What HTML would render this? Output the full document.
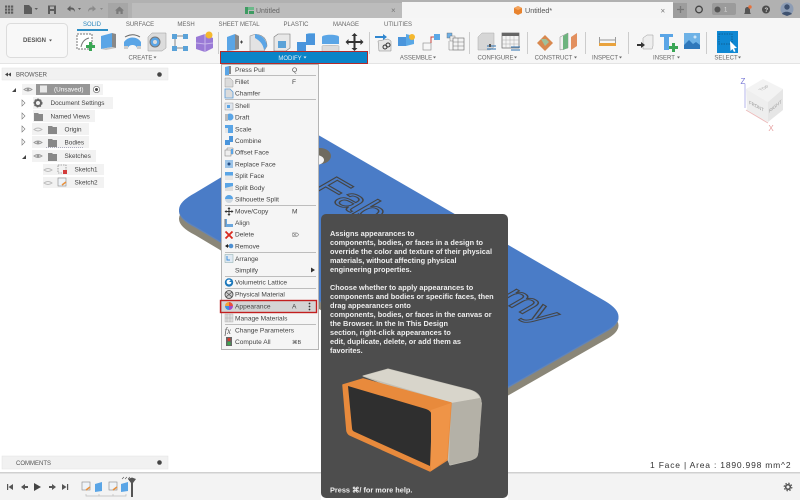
<!DOCTYPE html>
<html><head><meta charset="utf-8"><style>
html,body{margin:0;padding:0;width:800px;height:500px;overflow:hidden;background:#fff}
svg{display:block;font-family:"Liberation Sans",sans-serif;filter:blur(.3px)}
text{white-space:pre}
.w{font-size:7.35px;fill:#eee;font-weight:bold}
</style></head><body>
<svg width="800" height="500" viewBox="0 0 800 500" xmlns="http://www.w3.org/2000/svg">
<rect width="800" height="500" fill="#fff"/>

<!-- plate -->
<path d="M195 202Q163 219 195 235L470 399Q486 408 502 399L605 340Q632 326 605 310L320 145Q305 136 290 145Z" fill="#8a8678"/>
<path d="M195 194.500Q163 211.500 195 227.500L470 391.500Q486 400.500 502 391.500L605 332.500Q632 318.500 605 302.500L320 137.500Q305 128.500 290 137.500Z" fill="#5f84bc"/>
<path d="M195 193Q163 210 195 226L470 390Q486 399 502 390L605 331Q632 317 605 301L320 136Q305 127 290 136Z" fill="#4a7cc7"/>
<ellipse cx="320" cy="156" rx="11" ry="8" fill="#6f6b60"/>
<ellipse cx="316" cy="160" rx="8" ry="5" fill="#f4f4f4"/>
<g font-size="40" fill="none" stroke="#444" stroke-width="1.300">
<text transform="matrix(.866 .5 -.866 .5 310 189)">Fab</text>
<text transform="matrix(.866 .5 -.866 .5 542 325)" text-anchor="end">my</text>
</g>

<!-- top bar -->
<rect width="800" height="18" fill="#b1b1b1"/>
<rect x="108" y="3" width="20" height="15" fill="#a6a6a6"/>
<rect x="132" y="3" width="271" height="15" fill="#bcbcbc"/>
<rect x="402" y="2" width="271" height="16" fill="#f5f5f5"/>
<rect x="673" y="3" width="14" height="15" fill="#9d9d9d"/>
<g fill="#5c5c5c">
<rect x="5" y="5.500" width="2.200" height="2.200"/><rect x="8" y="5.500" width="2.200" height="2.200"/><rect x="11" y="5.500" width="2.200" height="2.200"/><rect x="5" y="8.500" width="2.200" height="2.200"/><rect x="8" y="8.500" width="2.200" height="2.200"/><rect x="11" y="8.500" width="2.200" height="2.200"/><rect x="5" y="11.500" width="2.200" height="2.200"/><rect x="8" y="11.500" width="2.200" height="2.200"/><rect x="11" y="11.500" width="2.200" height="2.200"/>
<path d="M24 5h5l3 3v6h-8z"/><path d="M34.500 8h3.500l-1.800 2z"/>
<path d="M48 5.500h8v8.500h-8zM50 6.500v2.500h4v-2.500zM50 11v3h4v-3z" fill-rule="evenodd"/>
<path id="u" d="M67 9l3.500-3.500v2h1c2 0 3.500 1.500 3.500 4.500c-1-2-2-2.500-4.500-2.500v2z"/><path d="M78 8h3l-1.500 2z"/>
<path d="M67 9l3.500-3.500v2h1c2 0 3.500 1.500 3.500 4.500c-1-2-2-2.500-4.500-2.500v2z" fill="#8a8a8a" transform="matrix(-1 0 0 1 163 0)"/><path d="M100 8h3l-1.500 2z" fill="#8a8a8a"/>
<path d="M119.500 6.500l4.500 4h-1.300v3.500h-2.200v-2.500h-2v2.500h-2.200v-3.500H115z" fill="#7a7a7a"/>
</g>
<rect x="245" y="7" width="3" height="7" fill="#3e9b62"/><rect x="248" y="7" width="6" height="3" fill="#6cb98a"/><rect x="249" y="11" width="5" height="3" fill="#3e9b62"/>
<text x="256" y="13" font-size="7" fill="#666">Untitled</text>
<text x="391" y="13" font-size="8" fill="#777">×</text>
<path d="M514 8l4-2 4 2v5l-4 2-4-2z" fill="#e8832e"/><path d="M514 8l4 2 4-2-4-2z" fill="#f4a35c"/>
<text x="525" y="13" font-size="7.200" fill="#555">Untitled*</text>
<text x="660.500" y="13.500" font-size="8" fill="#777">×</text>
<path d="M680.500 6v7M677 9.500h7" stroke="#777" stroke-width="1.300"/>
<circle cx="699" cy="9.500" r="3.300" fill="none" stroke="#444" stroke-width="1.300"/>
<rect x="712" y="3" width="24" height="12" rx="2" fill="#9b9b9b"/><circle cx="717.500" cy="9.500" r="3" fill="#555"/><text x="724" y="11.500" font-size="6" fill="#ddd">1</text>
<path d="M744 14c1-1 1-2 1-4 0-2 1-3 2.500-3S750 8 750 10c0 2 0 3 1 4z" fill="#555"/><circle cx="750" cy="7" r="1.700" fill="#e8703a"/>
<circle cx="766" cy="9.500" r="4" fill="#4d4d4d"/><text x="764.500" y="12" font-size="6" font-weight="bold" fill="#ddd">?</text>
<circle cx="787" cy="9" r="6.500" fill="#8c9cb4"/><circle cx="787" cy="7" r="2.700" fill="#3f5270"/><path d="M782 14c1-3 8-3 10 0l-5 2z" fill="#3f5270"/>

<!-- toolbar -->
<rect y="18" width="800" height="46" fill="#f6f6f6"/>
<rect y="63" width="800" height="1" fill="#e4e4e4"/>
<g font-size="6" fill="#666" text-anchor="middle">
<text x="92" y="26" fill="#2a86bd">SOLID</text><text x="140" y="26">SURFACE</text><text x="186" y="26">MESH</text><text x="239" y="26">SHEET METAL</text><text x="296" y="26">PLASTIC</text><text x="346" y="26">MANAGE</text><text x="398" y="26">UTILITIES</text>
<text x="140.500" y="59.500">CREATE</text><text x="416" y="59.500">ASSEMBLE</text><text x="495.500" y="59.500">CONFIGURE</text><text x="553.500" y="59.500">CONSTRUCT</text><text x="605" y="59.500">INSPECT</text><text x="664" y="59.500">INSERT</text><text x="726" y="59.500">SELECT</text>
</g>
<g fill="#666"><path d="M153.500 56.500h3l-1.500 2zM433 56.500h3l-1.500 2zM514 56.500h3l-1.500 2zM574 56.500h3l-1.500 2zM619 56.500h3l-1.500 2zM677 56.500h3l-1.500 2zM738 56.500h3l-1.500 2z"/></g>
<rect x="77" y="29" width="31" height="2" fill="#2e8fc6"/>
<rect x="6.500" y="23.500" width="61" height="34" rx="4" fill="#f8f8f8" stroke="#dcdcdc"/>
<text x="23" y="42" font-size="6" font-weight="bold" fill="#555">DESIGN</text><path d="M49 39.500h3l-1.500 2z" fill="#555"/>
<g stroke="#ccc"><path d="M218.500 32v22M369.500 32v22M469.500 32v22M527.500 32v22M585.500 32v22M628.500 32v22M706.500 32v22"/></g>

<!-- create icons -->
<rect x="77" y="34" width="15" height="15" fill="#fff" stroke="#777" stroke-dasharray="2 1"/><path d="M81 47c1-5 4-8 8-9" fill="none" stroke="#777"/><path d="M86 45h3v-3h3v3h3v3h-3v3h-3v-3h-3z" fill="#3aa655"/>
<path d="M101 36l11-3v14l-11 2z" fill="#5aa5e6"/><path d="M112 33l4 1v14l-4-1z" fill="#888"/><path d="M101 49l11-2 4 1-10 2z" fill="#c4c4c4"/>
<path d="M124 42c4-6 13-6 17 0v6h-4c-1-4-8-4-9 0h-4z" fill="#5aa5e6"/><path d="M125 37c5-3 10-3 15 0" fill="none" stroke="#666"/><rect x="124" y="46" width="4" height="3" fill="#ccc"/><rect x="137" y="46" width="4" height="3" fill="#ccc"/>
<path d="M148 37l4-4h14v15l-4 3h-14z" fill="#dcdcdc" stroke="#999" stroke-width=".5"/><circle cx="155" cy="42" r="5" fill="#5aa5e6" stroke="#777"/><circle cx="155" cy="42" r="2" fill="#ddd"/>
<g fill="#5aa2d8"><rect x="172" y="34" width="5" height="5"/><rect x="183" y="34" width="5" height="5"/><rect x="172" y="46" width="5" height="5"/><rect x="183" y="46" width="5" height="5"/></g><path d="M175 39v7M177 36h6M177 48h6" stroke="#888"/>
<path d="M196 37l9-3 8 4v10l-8 4-9-3z" fill="#9a7ad6"/><path d="M205 34v18M196 43l9 1 8-1" stroke="#c7b5ea" fill="none"/><circle cx="209" cy="35" r="3.500" fill="#f5b82e"/>

<!-- modify icons -->
<path d="M227 37l8-3v16l-8 1z" fill="#5aa5e6"/><path d="M235 34l4 2v13l-4 1z" fill="#888"/><path d="M240 42h3M241.500 40.500v3" stroke="#444"/>
<path d="M250 36c8-4 17 0 17 10l-3 5h-14z" fill="#e3e3e3" stroke="#888" stroke-width=".6"/><path d="M255 34c7 1 11 5 12 12l-3 4c-1-6-4-9-9-12z" fill="#5aa5e6"/>
<path d="M274 37l4-3h12v14l-4 3h-12z" fill="#e8e8e8" stroke="#777" stroke-width=".6"/><path d="M278 41h8v7h-8z" fill="#5aa2d8"/>
<path d="M297 42h9v-8h9v11h-9v7h-9z" fill="#4a95dc"/><path d="M306 34l3-1h6v1z" fill="#7fbdea"/>
<path d="M322 37c0-3 17-3 17 0v7h-17z" fill="#5aa5e6"/><path d="M322 46c0-1 17-1 17 0v5c0 2-17 2-17 0z" fill="#dcdcdc" stroke="#999" stroke-width=".4"/>
<path d="M354.500 33l3 3h-2v5h5v-2l3 3-3 3v-2h-5v5h2l-3 3-3-3h2v-5h-5v2l-3-3 3-3v2h5v-5h-2z" fill="#333"/>

<!-- assemble -->
<path d="M375 36h8v-2l4 3-4 3v-2h-8z" fill="#2f86cf"/><path d="M378 41l10-2 3 2v10h-12z" fill="#e6e6e6" stroke="#888" stroke-width=".5"/><circle cx="385" cy="47" r="2" fill="none" stroke="#333"/><circle cx="388" cy="45" r="2" fill="none" stroke="#333"/>
<rect x="398" y="37" width="8" height="9" fill="#4a95dc"/><path d="M406 34l8 2v8l-8 2z" fill="#5aa8e6"/><circle cx="412" cy="37" r="3" fill="#f5b82e"/>
<rect x="423" y="43" width="8" height="7" fill="#f6f6f6" stroke="#888" stroke-width=".6"/><path d="M431 43V37h4" fill="none" stroke="#c8423a"/><rect x="434" y="34" width="6" height="6" fill="#5aa8e6"/>
<rect x="447" y="33" width="5" height="5" fill="#6eb0e6" stroke="#666" stroke-width=".4"/><rect x="450" y="36" width="5" height="5" fill="#eee" stroke="#666" stroke-width=".4"/><rect x="453" y="38" width="11" height="12" fill="#f3f3f3" stroke="#666" stroke-width=".6"/><path d="M453 42h11M453 46h11M458 38v12M449 41v9h4" stroke="#777" stroke-width=".5" fill="none"/>

<!-- configure -->
<path d="M478 37l4-4h12v14l-4 3h-12z" fill="#d6d6d6" stroke="#aaa" stroke-width=".5"/><path d="M487 46h9M487 49h9" stroke="#2f72b0"/><rect x="489" y="44" width="2" height="3" fill="#555"/>
<rect x="502" y="33" width="17" height="15" fill="#f4f4f4" stroke="#666" stroke-width=".7"/><rect x="502" y="33" width="17" height="3" fill="#666"/><path d="M506 36v12M510 36v12M514 36v12M502 40h17M502 44h17" stroke="#aaa" stroke-width=".5"/><path d="M511 47h9M511 50h9" stroke="#2f72b0"/>
<!-- construct -->
<path d="M537 43l8-8 8 8-8 8z" fill="#d8884e"/><path d="M541 39l5 0 3 3-4 4z" fill="#9fc09a"/>
<path d="M560 37l8-4v15l-8 2z" fill="#f0f0f0" stroke="#888" stroke-width=".5"/><path d="M563 36l5-3v15l-5 2z" fill="#6db37e"/><path d="M571 37l6-4v13l-6 4z" fill="#e28f5e"/>
<!-- inspect -->
<path d="M599.500 37v7M615.500 37v7M600 40h15" stroke="#777" stroke-width=".7"/><rect x="599" y="43" width="17" height="3" fill="#e9a33e"/>
<!-- insert -->
<path d="M643 38l4-3h6v11l-1 3h-9z" fill="#eee" stroke="#999" stroke-width=".5"/><path d="M637 44h4v-2l4 3-4 3v-2h-4z" fill="#333"/>
<path d="M660 34h13v3h-4v13h-5V37h-4z" fill="#5aa5e6"/><path d="M669 46h3v-3h3v3h3v3h-3v3h-3v-3h-3z" fill="#3aa655"/>
<rect x="684" y="33" width="16" height="16" fill="#6eb2e6"/><path d="M684 49v-4l5-5 4 4 3-2 4 3v4z" fill="#2f78bb"/><circle cx="695" cy="37" r="1.500" fill="#cfe6f7"/>
<!-- select -->
<rect x="717" y="31" width="21" height="22" fill="#0f88d3"/><rect x="719" y="34" width="13" height="10" fill="none" stroke="#0d5f95" stroke-dasharray="1.500 1"/><path d="M730 41l7 7-3 .3 1.500 3-1.500.7-1.500-3-2 2z" fill="#fff"/>

<!-- browser -->
<rect x="2" y="68" width="166" height="12" fill="#f1f1f1" stroke="#e5e5e5" stroke-width=".5"/>
<path d="M5 74.500l3-2v4zM8 74.500l3-2v4z" fill="#444"/><text x="16" y="76.500" font-size="6" fill="#555">BROWSER</text><circle cx="159.500" cy="74.500" r="2.300" fill="#444"/>
<g fill="#f2f2f2"><rect x="22" y="84" width="81" height="11"/><rect x="33" y="97" width="80" height="12"/><rect x="33" y="110" width="62" height="12"/><rect x="32" y="123" width="57" height="12"/><rect x="32" y="136" width="57" height="12"/><rect x="32" y="150" width="64" height="12"/><rect x="43" y="164" width="61" height="11"/><rect x="43" y="177" width="61" height="11"/></g>
<rect x="36" y="84" width="54" height="11" fill="#969696"/><rect x="40" y="85.500" width="7" height="7" fill="#e8e8e8"/>
<text x="54" y="91.500" font-size="6.400" fill="#fff">(Unsaved)</text>
<circle cx="96.500" cy="89.500" r="3.200" fill="#fff" stroke="#666" stroke-width=".6"/><circle cx="96.500" cy="89.500" r="1.500" fill="#444"/>
<path d="M12 92l4-4v4zM22 159l4-4v4z" fill="#444"/>
<path d="M22 100l3 3-3 3zM22 113l3 3-3 3zM22 126l3 3-3 3zM22 139l3 3-3 3z" fill="#fff" stroke="#777" stroke-width=".6"/>
<g fill="none" stroke="#999"><path d="M24 89.500q4-3 8 0q-4 3-8 0z"/><path d="M34 129.500q4-3 8 0q-4 3-8 0z" stroke="#bbb"/><path d="M34 142.500q4-3 8 0q-4 3-8 0z"/><path d="M34 156q4-3 8 0q-4 3-8 0z"/><path d="M44 170q4-3 8 0q-4 3-8 0z" stroke="#bbb"/><path d="M44 183q4-3 8 0q-4 3-8 0z" stroke="#bbb"/></g>
<g fill="#999"><circle cx="28" cy="89.500" r="1.300"/><circle cx="38" cy="142.500" r="1.300"/><circle cx="38" cy="156" r="1.300"/></g>
<circle cx="38" cy="103" r="3" fill="none" stroke="#666" stroke-width="2"/><circle cx="38" cy="103" r="4" fill="none" stroke="#666" stroke-width="1" stroke-dasharray="1.500 1.500"/>
<g fill="#888"><path d="M34 113h4l1 1h4v7h-9z"/><path d="M48 126h4l1 1h4v7h-9z"/><path d="M48 139h4l1 1h4v7h-9z"/><path d="M48 153h4l1 1h4v7h-9z"/></g>
<path d="M46 147.500h38" stroke="#668" stroke-width=".6" stroke-dasharray="1 1"/>
<g font-size="6.400" fill="#444">
<text x="50.500" y="105.200">Document Settings</text><text x="50.500" y="118.500">Named Views</text><text x="64.500" y="131.500">Origin</text><text x="64.500" y="144.500">Bodies</text><text x="64.500" y="158">Sketches</text><text x="74.500" y="171.500">Sketch1</text><text x="74.500" y="184.500">Sketch2</text>
</g>
<rect x="58" y="165" width="8" height="8" fill="none" stroke="#666" stroke-width=".6" stroke-dasharray="1.500 1"/><rect x="63" y="170" width="4" height="4" fill="#d23c3c"/>
<rect x="58" y="178" width="8" height="8" fill="#eef3f8" stroke="#888" stroke-width=".6"/><path d="M62 185l4-3" stroke="#e8903c" stroke-width="1.500"/>

<!-- view cube -->
<path d="M745 84v24" stroke="#a5a5e6" stroke-width=".8"/>
<path d="M746 110l22 13" stroke="#ecbcbc" stroke-width="1"/>
<path d="M746 89l17-10 20 10-15 13z" fill="#f3f3f3"/><path d="M746 89l22 13v20l-21-12z" fill="#eeeeee"/><path d="M768 102l15-13v21l-15 12z" fill="#e6e6e6"/>
<text x="743" y="84" font-size="8" fill="#7a7ad6" text-anchor="middle">Z</text><text x="771" y="131" font-size="8" fill="#e6a0a0" text-anchor="middle">X</text>
<text transform="matrix(.8 -.4 .8 .4 761 91)" font-size="5.500" fill="#aaa">TOP</text>
<text transform="matrix(.86 .45 0 1 749 104)" font-size="5" fill="#999">FRONT</text>
<text transform="matrix(.8 -.65 0 1 769 113)" font-size="5" fill="#999">RIGHT</text>

<!-- menu -->
<rect x="221.500" y="64.500" width="97" height="285" fill="#f5f5f5" stroke="#b5b5b5"/>
<rect x="222" y="300" width="94" height="12" fill="#d4d4d4"/>
<g stroke="#bdbdbd"><path d="M225 75.500h91M225 99.500h91M225 205.500h91M225 252.500h91M225 276.500h91M225 288.500h91M225 300.500h91M225 324.500h91"/></g>
<g font-size="6.600" fill="#444">
<text x="235" y="72.200">Press Pull</text><text x="235" y="84.200">Fillet</text><text x="235" y="95.600">Chamfer</text><text x="235" y="108">Shell</text><text x="235" y="119.500">Draft</text><text x="235" y="131.500">Scale</text><text x="235" y="143.200">Combine</text><text x="235" y="154.600">Offset Face</text><text x="235" y="166.500">Replace Face</text><text x="235" y="178.200">Split Face</text><text x="235" y="190">Split Body</text><text x="235" y="201.500">Silhouette Split</text><text x="235" y="213.300">Move/Copy</text><text x="235" y="225.200">Align</text><text x="235" y="236.600">Delete</text><text x="235" y="248.500">Remove</text><text x="235" y="261">Arrange</text><text x="235" y="272.500">Simplify</text><text x="235" y="284.600">Volumetric Lattice</text><text x="235" y="296.600">Physical Material</text><text x="235" y="308.600">Appearance</text><text x="235" y="320.300">Manage Materials</text><text x="235" y="332.600">Change Parameters</text><text x="235" y="344">Compute All</text>
<text x="292" y="72.200">Q</text><text x="292" y="84.200">F</text><text x="292" y="213.300">M</text><text x="292" y="236.600" font-size="5">⌦</text><text x="292" y="308.600">A</text><text x="292" y="344" font-size="5.500">⌘B</text>
</g>
<path d="M311 267.500l4 2.500-4 2.500z" fill="#333"/>
<g fill="#333"><circle cx="309.500" cy="303.500" r=".9"/><circle cx="309.500" cy="306.500" r=".9"/><circle cx="309.500" cy="309.500" r=".9"/></g>
<!-- menu icons -->
<path d="M225 67l4-1v9h-4z" fill="#5aa5e6"/><path d="M229 66h2v8h-2z" fill="#888"/>
<path d="M225 78h5l3 3v6h-8z" fill="#dcdcdc" stroke="#888" stroke-width=".4"/>
<path d="M225 90h5l3 3v6h-8z" fill="#dcdcdc" stroke="#5a9bd8" stroke-width=".8" transform="translate(0 -1)"/>
<rect x="225" y="103" width="8" height="7" fill="#dfe6ee" stroke="#888" stroke-width=".4"/><rect x="227" y="105" width="3" height="3" fill="#5aa5e6"/>
<circle cx="230" cy="117" r="3.500" fill="#5aa5e6"/><path d="M225 114l3 0v7h-3z" fill="#bbb"/>
<rect x="225" y="125" width="8" height="8" fill="#e6e6e6"/><rect x="228" y="125" width="5" height="8" fill="#5aa5e6"/><rect x="225" y="125" width="8" height="3" fill="#5aa5e6"/>
<path d="M225 140h4v-4h4v6h-3v3h-5z" fill="#4a95dc"/>
<rect x="225" y="150" width="6" height="6" fill="#eee" stroke="#777" stroke-width=".5"/><path d="M227 150v-2h6v6h-2" fill="none" stroke="#777" stroke-width=".5"/><rect x="231" y="149" width="2" height="5" fill="#5aa5e6"/>
<rect x="225" y="160" width="8" height="8" fill="#9cc4e8"/><circle cx="229" cy="164" r="1.500" fill="#254f85"/>
<rect x="225" y="172" width="8" height="8" fill="#e6e6e6"/><rect x="225" y="172" width="8" height="3.500" fill="#5aa5e6"/>
<rect x="225" y="183" width="8" height="8" fill="#ddd"/><path d="M225 183h8v3l-8 2z" fill="#5aa5e6"/>
<circle cx="229" cy="199" r="4" fill="#cfd8e0"/><path d="M225 199a4 4 0 0 1 8 0z" fill="#5aa5e6"/>
<path d="M229 207l1.500 2h-1v2h2v-1l2 1.500-2 1.500v-1h-2v2h1l-1.500 2-1.500-2h1v-2h-2v1l-2-1.500 2-1.500v1h2v-2h-1z" fill="#333"/>
<path d="M225 219v8h8v-3h-6v-5z" fill="#6aa6dc"/><path d="M225 219v8" stroke="#777"/>
<path d="M225.500 231.500l7 7M232.500 231.500l-7 7" stroke="#d92b20" stroke-width="1.800"/>
<path d="M225 246l3-2v4z" fill="#222"/><circle cx="231" cy="246" r="2.300" fill="#4d8fd1"/><rect x="227" y="245.500" width="2" height="1" fill="#222"/>
<rect x="225" y="254.500" width="8" height="8" fill="#dfe9f3" stroke="#8aa" stroke-width=".5"/><path d="M227 256v4h3" stroke="#3f8fd8" fill="none"/>
<circle cx="229" cy="282.500" r="4.200" fill="#1c78bb"/><circle cx="229" cy="282" r="2.400" fill="#fff"/><path d="M229 282l3-3 1 3z" fill="#1c78bb"/>
<circle cx="229" cy="294.500" r="4" fill="#ccc" stroke="#444" stroke-width=".8"/><path d="M226 292l6 5M232 292l-6 5" stroke="#444" stroke-width=".6"/>
<path d="M229 306V302a4 4 0 0 1 4 4z" fill="#e8503c"/><path d="M229 306h4a4 4 0 0 1-4 4z" fill="#a24ac6"/><path d="M229 306v4a4 4 0 0 1-4-4z" fill="#3c8fe0"/><path d="M229 306h-4a4 4 0 0 1 4-4z" fill="#f2a23a"/>
<rect x="225" y="314" width="8" height="8" fill="#ddd" stroke="#aaa" stroke-width=".4"/><path d="M227 314v8M230 314v8M225 318h8" stroke="#aaa" stroke-width=".5"/>
<text x="224.500" y="334" font-size="9" font-family="Liberation Serif" font-style="italic" fill="#555">fx</text>
<rect x="226" y="337" width="6" height="9" fill="#666"/><circle cx="229" cy="339.500" r="1.500" fill="#d93a2b"/><circle cx="229" cy="343.500" r="1.800" fill="#3fa64f"/>
<rect x="220.500" y="300.500" width="96" height="12" fill="none" stroke="#c21f1f" stroke-width="1.400"/>

<!-- modify bar -->
<rect x="220.500" y="51.500" width="147" height="12" fill="#0a84c8" stroke="#b32a2a"/>
<text x="290" y="59.800" font-size="6" fill="#e6f2fa" text-anchor="middle">MODIFY</text><path d="M303.500 56.500h3l-1.500 2z" fill="#e6f2fa"/>

<!-- tooltip -->
<rect x="321" y="214" width="187" height="284" rx="5" fill="#4d4d4d"/>
<g class="w">
<text x="330" y="236">Assigns appearances to</text>
<text x="330" y="245">components, bodies, or faces in a design to</text>
<text x="330" y="254">override the color and texture of their physical</text>
<text x="330" y="263">materials, without affecting physical</text>
<text x="330" y="272">engineering properties.</text>
<text x="330" y="290">Choose whether to apply appearances to</text>
<text x="330" y="299">components and bodies or specific faces, then</text>
<text x="330" y="308">drag appearances onto</text>
<text x="330" y="317">components, bodies, or faces in the canvas or</text>
<text x="330" y="326">the Browser. In the In This Design</text>
<text x="330" y="335">section, right-click appearances to</text>
<text x="330" y="344">edit, duplicate, delete, or add them as</text>
<text x="330" y="353">favorites.</text>
<text x="330" y="492.500">Press ⌘/ for more help.</text>
</g>
<!-- tooltip box image -->
<path d="M363 376L388 369L470 390Q480 393 481 401L478 452Q477 458 471 460L450 465L440 440L440 405z" fill="#c3c0b6" stroke="#c3c0b6" stroke-linejoin="round"/>
<path d="M363 376L388 369L470 390Q477 392 480 398L453 403z" fill="#d8d5cb"/>
<path d="M451 403L480 398L482 403L478 455Q477 459 471 460L449 465z" fill="#b4b1a7"/>
<path d="M343 385L363 379L451 403L447 460L430 471L350 435Q348 434 347 431z" fill="#e88a3c" stroke="#e88a3c" stroke-width="1.500" stroke-linejoin="round"/>
<path d="M348 386L426 409Q432 411 432 417L430 466L355 432Q352 431 352 428z" fill="#2f2f2f"/>
<path d="M431 410L451 403L447 459L431 471z" fill="#ef9447"/>

<!-- comments -->
<rect x="2" y="456" width="166" height="13" fill="#f1f1f1" stroke="#e2e2e2" stroke-width=".5"/>
<text x="16" y="465" font-size="6" fill="#555">COMMENTS</text><circle cx="159.500" cy="462.500" r="2.300" fill="#444"/>
<text x="650" y="468" font-size="8.500" letter-spacing=".8" fill="#333">1 Face | Area : 1890.998 mm^2</text>

<!-- timeline -->
<rect y="472" width="321" height="28" fill="#f3f3f3"/><rect x="508" y="472" width="292" height="28" fill="#f3f3f3"/>
<rect y="472" width="321" height="1.500" fill="#d0d0d0"/><rect x="508" y="472" width="292" height="1.500" fill="#d0d0d0"/>
<g fill="#555"><path d="M7 484h1.200v6H7zM13 484v6l-4.500-3z"/><path d="M21 487l4-3v6zM25 486h3v2h-3z"/><path d="M34 483l7 4-7 4z" fill="#444"/><path d="M49 486h3v2h-3zM56 487l-4-3v6z"/><path d="M62 484v6l4.500-3zM67 484h1.200v6H67z"/></g>
<rect x="82" y="482" width="8" height="8" fill="#eef3f8" stroke="#888" stroke-width=".6"/><path d="M86 490l4-3" stroke="#e8903c" stroke-width="1.500"/>
<rect x="109" y="482" width="8" height="8" fill="#eef3f8" stroke="#888" stroke-width=".6"/><path d="M113 490l4-3" stroke="#e8903c" stroke-width="1.500"/>
<path d="M95 484l7-2v9l-7 1z" fill="#5aa5e6"/><path d="M121 484l7-2v9l-7 1z" fill="#5aa5e6"/>
<path d="M86 494v2h40v-2M99 494v2M113 494v2" fill="none" stroke="#bbb" stroke-width=".7"/>
<path d="M128 479l4-1.500 4 1.500-3 4v14h-2v-14z" fill="#555"/><path d="M122 479l2-2M125 479l2-2M128 479l2-2" stroke="#555" stroke-width=".6"/>
<circle cx="788" cy="487" r="2.300" fill="none" stroke="#555" stroke-width="1.600"/><circle cx="788" cy="487" r="3.800" fill="none" stroke="#555" stroke-width="1.200" stroke-dasharray="1.500 1.500"/>
</svg>
</body></html>
